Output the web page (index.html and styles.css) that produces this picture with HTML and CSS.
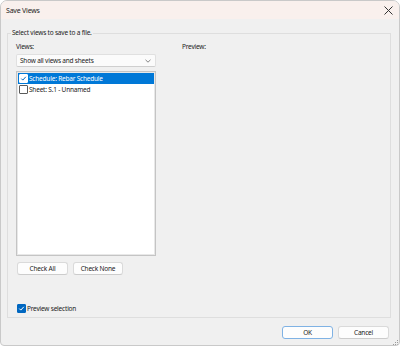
FILE: index.html
```html
<!DOCTYPE html>
<html lang="en">
<head>
  <meta charset="UTF-8" />
  <title>Save Views</title>
  <link rel="stylesheet" href="styles.css">
</head>
<body>
  <div class="window">
    <div class="titlebar">
      <span class="title">Save Views</span>
      <svg class="close" width="9" height="9" viewBox="0 0 9 9">
        <path d="M0.5 0.5 L8.5 8.5 M8.5 0.5 L0.5 8.5" stroke="#333" stroke-width="1" fill="none" />
      </svg>
    </div>

    <div class="content">
      <div class="group">
        <span class="legend">Select views to save to a file.</span>

        <div class="columns">
          <div class="left">
            <span class="lbl">Views:</span>
            <div class="dropdown">
              <span>Show all views and sheets</span>
              <svg width="6" height="4" viewBox="0 0 6 4">
                <path d="M0.5 0.8 L3 3.2 L5.5 0.8" stroke="#666" stroke-width="0.8" fill="none" />
              </svg>
            </div>
            <div class="listbox">
              <div class="row selected">
                <span class="check on-blue">
                  <svg width="7" height="7" viewBox="0 0 7 7"><path d="M1.3 3.6 L2.8 5.1 L5.8 1.8" stroke="#0067c0" stroke-width="1" fill="none" /></svg>
                </span>
                <span>Schedule: Rebar Schedule</span>
              </div>
              <div class="row">
                <span class="check"></span>
                <span>Sheet: S.1 - Unnamed</span>
              </div>
            </div>
            <div class="btnrow">
              <button class="btn">Check All</button>
              <button class="btn narrow">Check None</button>
            </div>
          </div>
          <div class="right">
            <span class="lbl">Preview:</span>
          </div>
        </div>

        <div class="preview-opt">
          <span class="check filled">
            <svg width="7" height="7" viewBox="0 0 7 7"><path d="M1.3 3.6 L2.8 5.1 L5.8 1.8" stroke="#fff" stroke-width="1" fill="none" /></svg>
          </span>
          <span>Preview selection</span>
        </div>
      </div>

      <div class="footer">
        <button class="btn default">OK</button>
        <button class="btn">Cancel</button>
      </div>
      <svg class="grip" width="5" height="5" viewBox="0 0 5 5">
        <rect x="4" y="0" width="1" height="1" fill="#9a9a9a" />
        <rect x="2" y="2" width="1" height="1" fill="#9a9a9a" />
        <rect x="4" y="2" width="1" height="1" fill="#9a9a9a" />
        <rect x="0" y="4" width="1" height="1" fill="#9a9a9a" />
        <rect x="2" y="4" width="1" height="1" fill="#9a9a9a" />
        <rect x="4" y="4" width="1" height="1" fill="#9a9a9a" />
      </svg>
    </div>
  </div>
</body>
</html>
```

FILE: styles.css
```css
html, body {
  margin: 0;
  padding: 0;
  background-color: #ffffff;
  font-family: 'Noto Sans', 'Liberation Sans', sans-serif;
  font-size: 6.5px;
  letter-spacing: -0.2px;
  color: #222222;
}
.window {
  width: 400px;
  height: 346px;
  box-sizing: border-box;
  border: 1px solid #c9c9c9;
  border-radius: 7px 7px 4px 4px;
  overflow: hidden;
  display: flex;
  flex-direction: column;
  background-color: #f0f0f0;
}
.titlebar {
  height: 18px;
  background-color: #f9f0ed;
  display: flex;
  align-items: center;
  justify-content: space-between;
  padding: 0 6px 0 5px;
  flex-shrink: 0;
}
.title {
  font-size: 7px;
  color: #222;
}
.content {
  flex-grow: 1;
  display: flex;
  flex-direction: column;
  padding: 0 8px 0 6px;
}
.group {
  margin-top: 14px;
  padding: 0 8px 0 8px;
  border: 1px solid #dedede;
  height: 285px;
  box-sizing: border-box;
  display: flex;
  flex-direction: column;
}
.legend {
  align-self: flex-start;
  margin: -6px 0 0 -5px;
  padding: 0 1px;
  line-height: 10px;
  background-color: #f0f0f0;
}
.columns {
  display: flex;
  gap: 26px;
  margin-top: 4px;
}
.left {
  width: 140px;
  display: flex;
  flex-direction: column;
}
.lbl {
  display: block;
  line-height: 10px;
  margin-bottom: 2px;
}
.dropdown {
  height: 13px;
  box-sizing: border-box;
  background-color: #fbfbfb;
  border: 1px solid #e0e0e0;
  border-bottom-color: #cfcfcf;
  border-radius: 2px;
  display: flex;
  align-items: center;
  justify-content: space-between;
  padding: 0 4px 0 3px;
}
.listbox {
  margin-top: 4px;
  height: 185px;
  box-sizing: border-box;
  background-color: #ffffff;
  border: 1px solid #c4c4c4;
  box-shadow: inset 0 0 0 1px #e8e8e8;
  padding: 1px;
}
.row {
  height: 11px;
  display: flex;
  align-items: center;
  gap: 1px;
  padding-left: 1px;
}
.row.selected {
  background-color: #0078d7;
  color: #ffffff;
}
.check {
  width: 7px;
  height: 7px;
  border: 1px solid #5a5a5a;
  border-radius: 1px;
  background-color: #ffffff;
  display: flex;
  align-items: center;
  justify-content: center;
  flex-shrink: 0;
}
.check.on-blue {
  border-color: #ffffff;
}
.check.filled {
  background-color: #0067c0;
  border-color: #0067c0;
}
.btnrow {
  display: flex;
  gap: 5px;
  margin-top: 6px;
  padding-left: 1px;
}
.btn {
  font-family: inherit;
  font-size: 6.5px;
  letter-spacing: -0.2px;
  color: #222222;
  background-color: #fdfdfd;
  border: 1px solid #dadada;
  border-bottom-color: #cccccc;
  border-radius: 3px;
  width: 51px;
  height: 13px;
  padding: 0;
  white-space: nowrap;
}
.btn.narrow {
  width: 50px;
}
.btn.default {
  border-color: #7fb2e4;
}
.preview-opt {
  margin-top: auto;
  margin-bottom: 4px;
  display: flex;
  align-items: center;
  gap: 1px;
  padding-left: 1px;
}
.footer {
  display: flex;
  justify-content: flex-end;
  gap: 5px;
  margin-top: 8px;
  padding-right: 2px;
}
.grip {
  align-self: flex-end;
  margin: 1px -7px 0 0;
}
```
